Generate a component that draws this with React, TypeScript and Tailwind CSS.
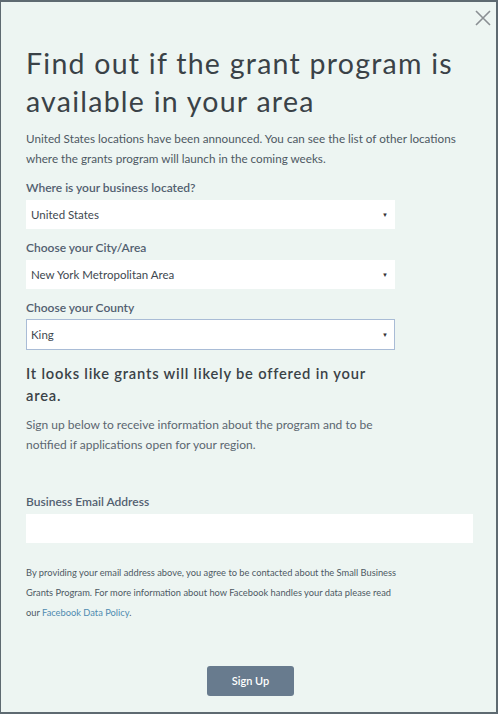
import React from "react";

function SelectBox({ value, focused }: { value: string; focused?: boolean }) {
  return (
    <div
      className={`w-[369px] bg-white flex items-center justify-between pl-[4px] pr-[6px] ${
        focused ? "h-[31px] border border-[#a9bcd6]" : "h-[29px] border border-transparent"
      }`}
    >
      <span className="text-[11.5px] text-[#3e4850]">{value}</span>
      <span className="text-[6px] text-[#333] leading-none">▼</span>
    </div>
  );
}

function Label({ children, className }: { children: React.ReactNode; className: string }) {
  return (
    <div className={`text-[12px] font-semibold text-[#526070] leading-[16px] ${className}`}>{children}</div>
  );
}

export default function App() {
  return (
    <div
      className="w-[498px] h-[714px] bg-[#edf5f2] border-[2px] border-[#5e6a71] border-l-[1px] relative overflow-hidden"
      style={{ fontFamily: "Lato, 'Open Sans', sans-serif" }}
    >
      <button className="absolute right-[3px] top-[6px] w-[20px] h-[20px] flex items-center justify-center">
        <svg width="18" height="18" viewBox="0 0 18 18">
          <path d="M2 2 L16 16 M16 2 L2 16" stroke="#8a8f93" strokeWidth="1.6" fill="none" />
        </svg>
      </button>
      <div className="pl-[25px] pt-[42px]">
        <h1 className="text-[28.5px] leading-[38px] text-[#3a4247] tracking-[1.25px] font-normal w-[440px]">
          Find out if the grant program is available in your area
        </h1>
        <p className="mt-[8px] text-[11.7px] leading-[20px] text-[#4d5963] w-[440px]">
          United States locations have been announced. You can see the list of other locations where the grants program will launch in the coming weeks.
        </p>
        <Label className="mt-[12px]">Where is your business located?</Label>
        <div className="mt-[4px]">
          <SelectBox value="United States" />
        </div>
        <Label className="mt-[11px]">Choose your City/Area</Label>
        <div className="mt-[4px]">
          <SelectBox value="New York Metropolitan Area" />
        </div>
        <Label className="mt-[11px]">Choose your County</Label>
        <div className="mt-[3px]">
          <SelectBox value="King" focused />
        </div>
        <h2 className="mt-[12px] text-[14.7px] leading-[22px] font-semibold tracking-[0.8px] text-[#3a4247] w-[370px]">
          It looks like grants will likely be offered in your area.
        </h2>
        <p className="mt-[9px] text-[12px] leading-[20px] text-[#5b6670] w-[365px]">
          Sign up below to receive information about the program and to be notified if applications open for your region.
        </p>
        <Label className="mt-[39px]">Business Email Address</Label>
        <div className="mt-[4px] w-[447px] h-[29px] bg-white" />
        <p className="mt-[20px] text-[9.3px] leading-[20px] text-[#4d5963] w-[440px] whitespace-nowrap">
          By providing your email address above, you agree to be contacted about the Small Business
          <br />
          Grants Program. For more information about how Facebook handles your data please read
          <br />
          our <span className="text-[#4f8bb0]">Facebook Data Policy</span>.
        </p>
        <div className="mt-[43px] pl-[181px]">
          <button className="w-[87px] h-[30px] rounded-[3px] bg-[#687b8e] text-white text-[11px] font-semibold">
            Sign Up
          </button>
        </div>
      </div>
    </div>
  );
}
